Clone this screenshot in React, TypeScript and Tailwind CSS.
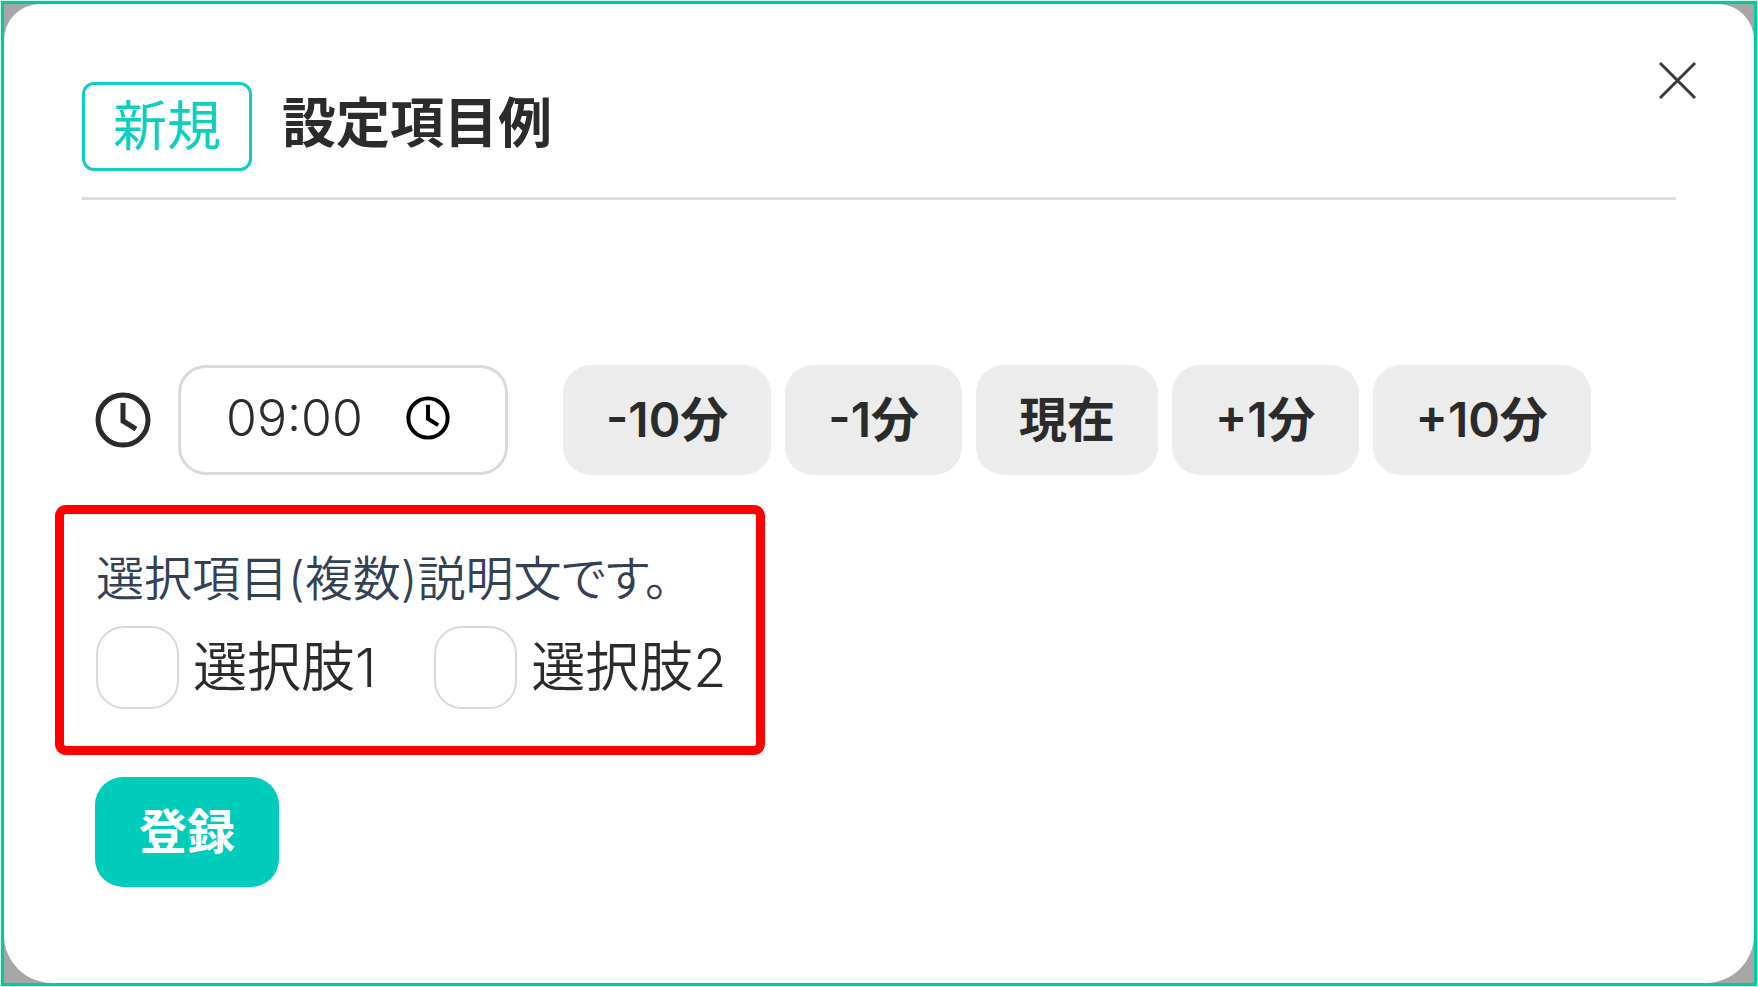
import { useState } from "react";

type stepProps = {
  id: number;
  label: string;
  minutes: number | null;
};

type optionProps = {
  id: string;
  label: string;
};

const steps: stepProps[] = [
  { id: 1, label: "-10分", minutes: -10 },
  { id: 2, label: "-1分", minutes: -1 },
  { id: 3, label: "現在", minutes: null },
  { id: 4, label: "+1分", minutes: 1 },
  { id: 5, label: "+10分", minutes: 10 },
];

const options: optionProps[] = [
  { id: "option-1", label: "選択肢1" },
  { id: "option-2", label: "選択肢2" },
];

const formatTime = (total: number) => {
  const minutes = (total + 1440) % 1440;
  const hh = String(Math.floor(minutes / 60)).padStart(2, "0");
  const mm = String(minutes % 60).padStart(2, "0");
  return `${hh}:${mm}`;
};

function ClockIcon({ className }: { className: string }) {
  return (
    <svg
      className={className}
      viewBox="0 0 56 56"
      fill="none"
      stroke="currentColor"
      strokeWidth="5"
      aria-hidden="true"
    >
      <circle cx="28" cy="28" r="25" />
      <path d="M28 11v18l13 8" />
    </svg>
  );
}

export default function App() {
  const [time, setTime] = useState<string>("09:00");

  const handleStep = (minutes: number | null) => {
    if (minutes === null) {
      const now = new Date();
      setTime(formatTime(now.getHours() * 60 + now.getMinutes()));
      return;
    }
    const [hh, mm] = time.split(":").map(Number);
    setTime(formatTime((hh || 0) * 60 + (mm || 0) + minutes));
  };

  return (
    <div
      lang="ja"
      className="min-h-screen p-px bg-[#d5f5ec] flex font-['Inter','Noto_Sans_CJK_JP',sans-serif] text-[#2b2b2b]"
    >
      <div className="grow flex border-3 border-[#00cc99] bg-[#a6a6a6]">
        <main className="relative grow bg-white rounded-t-[36px] rounded-b-[48px] px-[78px] pt-[78px] pb-20">
          <button
            type="button"
            aria-label="閉じる"
            className="absolute top-14 right-14 cursor-pointer"
          >
            <svg
              className="size-10"
              viewBox="0 0 40 40"
              fill="none"
              stroke="#3a3a3a"
              strokeWidth="3"
              aria-hidden="true"
            >
              <path d="M2 3l35 35M37 3L2 38" />
            </svg>
          </button>

          <header className="flex items-start gap-[30px] pb-[26px] border-b-3 border-[#dedede]">
            <span className="flex items-center h-[89px] px-7 border-3 border-[#0ccfc0] rounded-xl text-[54px] leading-[80px] text-[#0ccfc0]">
              新規
            </span>
            <h1 className="text-[54px] leading-[84px] font-bold">
              設定項目例
            </h1>
          </header>

          <form
            className="mt-[165px]"
            onSubmit={(event) => event.preventDefault()}
          >
            <div className="flex flex-wrap items-center gap-y-4 pl-[13px]">
              <label htmlFor="time" aria-label="時刻">
                <ClockIcon className="size-14" />
              </label>
              <div className="flex items-center w-[330px] h-[110px] ml-[27px] mr-[55px] px-[45px] pb-1 border-3 border-[#d9d9d9] rounded-[28px]">
                <input
                  id="time"
                  type="text"
                  inputMode="numeric"
                  value={time}
                  onChange={(event) => setTime(event.target.value)}
                  className="w-[180px] text-[50px] font-[350] outline-none"
                />
                <button
                  type="button"
                  aria-label="時刻を選択"
                  className="shrink-0 text-black cursor-pointer"
                >
                  <ClockIcon className="size-11" />
                </button>
              </div>
              <div className="flex flex-wrap gap-3.5">
                {steps.map((step: stepProps) => (
                  <button
                    key={step.id}
                    type="button"
                    onClick={() => handleStep(step.minutes)}
                    className="h-[110px] px-[43px] bg-[#ececec] rounded-[28px] text-5xl font-semibold cursor-pointer"
                  >
                    {step.label}
                  </button>
                ))}
              </div>
            </div>

            <fieldset className="w-[710px] h-[250px] mt-[30px] -ml-[27px] pl-8 pt-8 border-9 border-[#ff0000] rounded-[11px]">
              <p className="text-5xl leading-[66px] font-[350] text-[#334155] [font-feature-settings:'palt']">
                選択項目(複数)説明文です。
              </p>
              <div className="flex gap-[58px] mt-3.5">
                {options.map((option: optionProps) => (
                  <div key={option.id} className="flex items-center gap-3.5">
                    <input
                      id={option.id}
                      type="checkbox"
                      className="appearance-none shrink-0 size-[83px] border-2 border-[#d9d9d9] rounded-[28px] checked:bg-[#00ccbc]"
                    />
                    <label
                      htmlFor={option.id}
                      className="text-[54px] leading-[80px] font-[350] whitespace-nowrap"
                    >
                      {option.label}
                    </label>
                  </div>
                ))}
              </div>
            </fieldset>

            <button
              type="submit"
              className="h-[110px] mt-[22px] ml-[13px] px-11 bg-[#00ccbc] rounded-[28px] text-5xl font-bold text-white cursor-pointer"
            >
              登録
            </button>
          </form>
        </main>
      </div>
    </div>
  );
}
